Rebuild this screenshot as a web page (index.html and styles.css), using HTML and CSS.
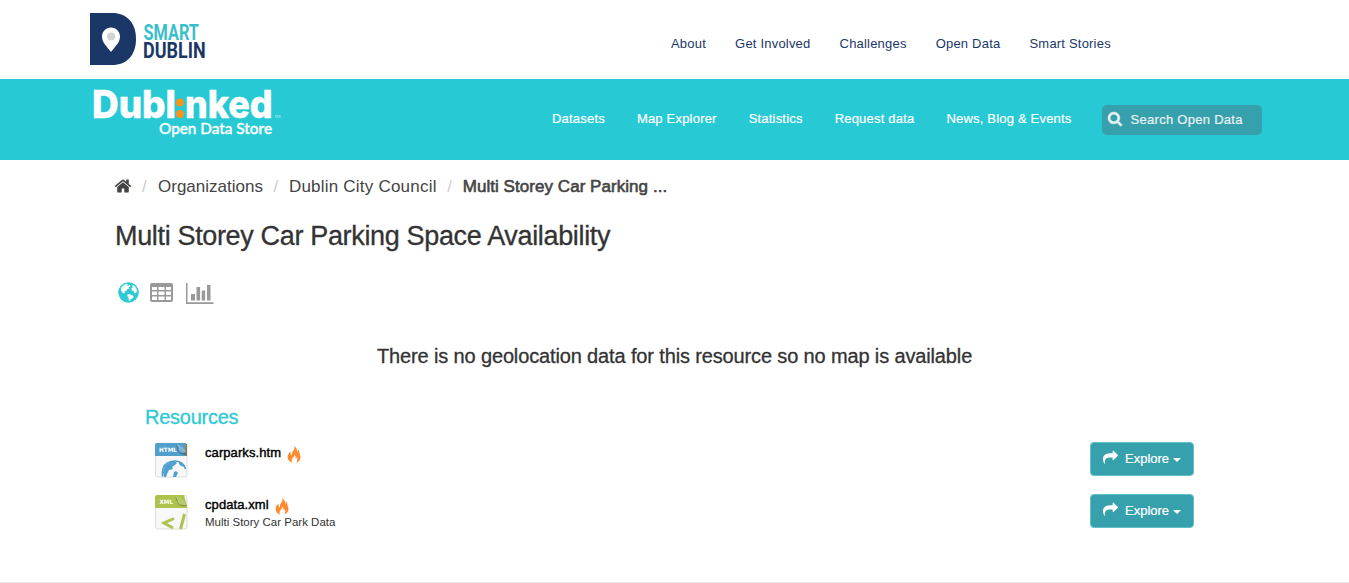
FILE: index.html
```html
<!DOCTYPE html>
<html lang="en">
<head>
<meta charset="utf-8">
<title>Multi Storey Car Parking Space Availability</title>
<link rel="stylesheet" href="styles.css">
</head>
<body>
<svg width="0" height="0" class="defs">
  <symbol id="flame" viewBox="0 0 14 17"><path fill="#ff8a2b" d="M7 0c1.300 2.500-.3 4-1.300 5.600C4.800 7 5 8.600 4.700 9.800 3.700 9 3.500 7.500 3.700 5.800 1.300 7.500.1 9.700.7 12c.6 2.400 2.300 4 4.300 4.600-.9-2-.2-3.800 1-5 .9-.9 1.300-2 1-3.200 1.600 1.300 1.900 2.900 1.500 4.400.8-.4 1.300-1.100 1.300-2 1 2.200.6 4.300-.7 6 2.600-.8 4.500-3 4.400-5.900-.1-2.900-2-4-1.200-7.300-1.400.8-2 2.200-1.800 3.900C10.400 5 10.200 2 7 0z"/></symbol>
  <symbol id="share" viewBox="0 0 1792 1792"><path fill="#fff" d="M1792 640q0 26-19 45l-512 512q-19 19-45 19t-45-19-19-45v-256h-224q-98 0-175.500 6t-154 21.500-133 42.500-105.500 69.500-80 101-48.500 138.500-17.500 181q0 55 5 123 0 6 2.500 23.500t2.500 26.500q0 15-8.500 25t-23.500 10q-16 0-28-17-7-9-13-22t-13.500-30-10.500-24q-127-285-127-451 0-199 53-333 162-403 875-403h224v-256q0-26 19-45t45-19 45 19l512 512q19 19 19 45z"/></symbol>
</svg>
<header class="top">
  <svg class="smart-logo" width="118" height="54" viewBox="0 0 118 54">
    <path fill="#1b3768" d="M0 1h22C37 1 46 11 46 27S37 53 22 53H0z"/>
    <path fill="#fff" d="M21 15.500c-5 0-9 4-9 9C12 31 17.500 35 21 40c3.500-5 9-9 9-15.500 0-5-4-9-9-9z"/>
    <circle cx="21" cy="24.500" r="4" fill="#d1d3d4"/>
    <text class="lt smart" transform="translate(53.500 28) scale(.72 1)" textLength="77" lengthAdjust="spacingAndGlyphs">SMART</text>
    <text class="lt dublin" transform="translate(53 46) scale(.72 1)" textLength="87" lengthAdjust="spacingAndGlyphs">DUBLIN</text>
  </svg>
  <nav class="nav-top"><a>About</a><a>Get Involved</a><a>Challenges</a><a>Open Data</a><a>Smart Stories</a></nav>
</header>
<div class="band">
  <svg class="store-logo" width="192" height="52" viewBox="0 0 192 52">
    <text class="brand" x="0" y="31" textLength="84" lengthAdjust="spacingAndGlyphs">Dubl</text>
    <text class="brand" x="93" y="31" textLength="87.500" lengthAdjust="spacingAndGlyphs">nked</text>
    <circle cx="88" cy="15.500" r="4" fill="#f7941e"/><circle cx="88" cy="27" r="4" fill="#f7941e"/>
    <text class="tm" x="182.500" y="31">TM</text>
    <text class="store" x="67" y="46.500" textLength="113" lengthAdjust="spacingAndGlyphs">Open Data Store</text>
  </svg>
  <nav class="nav-main"><a>Datasets</a><a>Map Explorer</a><a>Statistics</a><a>Request data</a><a>News, Blog &amp; Events</a></nav>
  <div class="search">
    <svg width="15" height="15" viewBox="0 0 1792 1792"><path fill="#e9f1f2" stroke="#e9f1f2" stroke-width="70" d="M1152 832q0-185-131.500-316.500t-316.500-131.500-316.500 131.500-131.500 316.500 131.500 316.500 316.500 131.500 316.500-131.500 131.500-316.500zm512 832q0 52-38 90t-90 38q-54 0-90-38l-343-342q-179 124-399 124-143 0-273.500-55.500t-225-150-150-225-55.500-273.500 55.500-273.500 150-225 225-150 273.500-55.500 273.500 55.500 225 150 150 225 55.500 273.500q0 220-124 399l343 343q37 37 37 90z"/></svg>
    <span>Search Open Data</span>
  </div>
</div>
<main>
  <div class="crumbs">
    <svg class="home" width="18" height="18" viewBox="0 0 1792 1792"><path fill="#444" d="M1472 992v480q0 26-19 45t-45 19h-384v-384h-256v384h-384q-26 0-45-19t-19-45v-480q0-1 .5-3t.5-3l575-474 575 474q1 2 1 6zm223-69l-62 74q-8 9-21 11h-3q-13 0-21-7l-692-577-692 577q-12 8-24 7-13-2-21-11l-62-74q-8-10-7-23.500t11-21.500l719-599q32-26 76-26t76 26l244 204v-195q0-14 9-23t23-9h192q14 0 23 9t9 23v408l219 182q10 8 11 21.500t-7 23.500z"/></svg>
    <i>/</i><a>Organizations</a><i>/</i><a class="council">Dublin City Council</a><i>/</i><a class="current">Multi Storey Car Parking ...</a>
  </div>
  <h1>Multi Storey Car Parking Space Availability</h1>
  <div class="views">
    <svg class="globe" width="21" height="21" viewBox="0 0 21 21"><circle cx="10.500" cy="10.500" r="10.300" fill="#2fcbd4"/><path fill="#fff" d="M3.300 5.500 6 2.700l3-.9.800.7-1 1 1.500.2 1.500-1 .5 1.200-1.500 1.300.5 1.200-2 .8-1.300 1.800-1.800.7.800 1.300-1.400.2-1.600-1-1.200-2.200zM9.500 12.500l2.200-.5 2 1.200 2 .8-1 2.300-2 1-.8 1.800-1-.4-.3-3-1.300-1.500zM14 3.800l1.800-.6 2.200 2.500 1 3-1 2.300-1.600.2-.7-2.200-1.900-.5-.6-2 1.500-.7z"/></svg>
    <svg class="table" width="23" height="19" viewBox="0 0 23 19"><rect width="23" height="19" rx="2" fill="#999"/><path fill="#fff" d="M2 4h5v3H2zm6.500 0h6v3h-6zM16 4h5v3h-5zM2 8.500h5v3.500H2zm6.500 0h6V12h-6zm7.500 0h5V12h-5zM2 13.500h5V17H2zm6.500 0h6V17h-6zm7.500 0h5V17h-5z"/></svg>
    <svg class="chart" width="28" height="21" viewBox="0 0 28 21"><path fill="#999" d="M0 0h1.500v19.200H27.500V21H0zM5 11h4v6.500H5zm5.500-7h3.600v13.500h-3.600zm5.200 3.500h3.500v10h-3.500zM21 2h3.500v15.500H21z"/></svg>
  </div>
  <p class="notice">There is no geolocation data for this resource so no map is available</p>
  <section class="resources">
    <h2>Resources</h2>
    <div class="row">
      <svg class="file" width="33" height="35" viewBox="0 0 33 35">
        <rect x=".5" y=".5" width="31.500" height="33.500" rx="2" fill="#f8f8f8" stroke="#ddd"/>
        <path fill="#519fcc" d="M2 0h29v13H0V2q0-2 2-2z"/><path fill="#a7752d" d="M30.500 1H32v12h-1.500z"/>
        <path fill="#3f779a" d="M21 1l10 8v3q-5 0-8-3z"/><path fill="#80b3d0" d="M21 1q8 2 10 8-5 2-7-1 0-4-3-7z"/>
        <text class="ext" x="4" y="9.300" textLength="18" lengthAdjust="spacingAndGlyphs">HTML</text>
        <path fill="none" stroke="#519fcc" stroke-width="1.600" d="M7.500 33.500q-1-10 5-13.500 8-4 14 0 3 2 4 6"/>
        <path fill="#519fcc" d="M14 20l5-2 3 2-2 2-3 2 1 2-4 1-2 4-1 3h-2l-1-5 2-6zM24 19l3 2 2 3-3-1-2-2zM19 29l2-1 2 2-2 4h-3z"/>
      </svg>
      <div class="info"><div class="name"><span>carparks.htm</span><svg width="14" height="17"><use href="#flame"/></svg></div></div>
      <div class="button"><svg width="15" height="15"><use href="#share"/></svg><span>Explore</span><b></b></div>
    </div>
    <div class="row">
      <svg class="file" width="33" height="35" viewBox="0 0 33 35">
        <rect x=".5" y=".5" width="31.500" height="33.500" rx="2" fill="#f8f8f8" stroke="#ddd"/>
        <path fill="#adc34e" d="M2 0h27l3 11v2H0V2q0-2 2-2z"/>
        <path fill="#7b8d33" d="M20 1l12 10q-6 1-9-2z"/><path fill="#b9ca72" d="M20 1q8 2 12 9-6 1-9-2 0-4-3-7z"/>
        <text class="ext" x="4.500" y="9" textLength="13.500" lengthAdjust="spacingAndGlyphs">XML</text>
        <path fill="none" stroke="#adc34e" stroke-width="3" d="M19 23.500l-10 4.500 9 5M29.500 19l-4 15"/>
      </svg>
      <div class="info"><div class="name"><span>cpdata.xml</span><svg width="14" height="17"><use href="#flame"/></svg></div><div class="desc">Multi Story Car Park Data</div></div>
      <div class="button"><svg width="15" height="15"><use href="#share"/></svg><span>Explore</span><b></b></div>
    </div>
  </section>
</main>
</body>
</html>
```
FILE: styles.css
```css
* { box-sizing: border-box; }
body { margin: 0; height: 583px; overflow: hidden; background: #fff; color: #333; font: 13px "Liberation Sans", Arial, sans-serif; display: flex; flex-direction: column; }
svg { display: block; flex: none; overflow: visible; }
.defs { display: none; }
.top { height: 79px; flex: none; display: flex; padding: 12px 0 0 90px; }
.lt { font: bold 22px Roboto, sans-serif; }
.smart { fill: #39bfc9; }
.dublin { fill: #1b3768; }
.nav-top, .nav-main { display: flex; letter-spacing: .2px; line-height: 16px; white-space: nowrap; }
.nav-top { gap: 29.100px; margin: 24px 0 0 463px; color: #1b3768; }
.band { height: 81px; flex: none; display: flex; background: #27cad4; padding: 8px 0 0 92px; }
.brand { font: 800 38px Inter, sans-serif; fill: #fff; stroke: #fff; stroke-width: .5px; }
.tm { font: 4px Lato, sans-serif; fill: #d6f4f6; }
.store { font: 500 15px Lato, sans-serif; fill: #fff; stroke: #fff; stroke-width: .35px; }
.nav-main { gap: 32px; margin: 24px 0 0 268px; color: #fff; -webkit-text-stroke: .2px #fff; }
.search { width: 160px; height: 30px; margin: 18px 0 0 30px; background: #36a1ac; border-radius: 5px; display: flex; padding: 6px 0 0 6px; gap: 8px; color: #e9f1f2; letter-spacing: .28px; line-height: 17px; -webkit-text-stroke: .2px #e9f1f2; }
main { flex: 1; border-bottom: 1px solid #e8e8e8; padding: 16px 0 0 115px; }
.crumbs { display: flex; height: 22px; line-height: 22px; font-size: 17px; letter-spacing: 0; color: #444; white-space: nowrap; }
.crumbs i { font-style: normal; color: #ccc; width: 5px; margin: 0 10.500px; }
.crumbs i:first-of-type { margin: 0 11px; }
.home { margin: 1px -1px 0 -1px; }
.council { letter-spacing: .22px; }
.current { letter-spacing: .05px; -webkit-text-stroke: .6px #444; }
h1 { font-size: 27px; font-weight: 400; line-height: 32px; letter-spacing: -.34px; margin: 22px 0 0; -webkit-text-stroke: .3px #333; }
.views { display: flex; height: 22px; margin: 30px 0 0 3px; }
.table { margin: 1px 0 0 11px; }
.chart { margin: 1px 0 0 13px; }
.notice { margin: 40px 0 0 262px; font-size: 20px; line-height: 24px; letter-spacing: -.14px; -webkit-text-stroke: .3px #333; }
.resources { padding-left: 30px; }
h2 { color: #2fc9d3; font-size: 20px; font-weight: 400; line-height: 24px; letter-spacing: -.26px; margin: 37px 0 13px; -webkit-text-stroke: .3px #2fc9d3; }
.row { display: flex; height: 52px; padding-left: 10px; }
.file { margin-top: 1px; }
.ext { font: bold 6px "DejaVu Sans", sans-serif; fill: #fff; }
.info { width: 885px; margin-left: 17px; }
.name { display: flex; gap: 6px; color: #000; line-height: 16px; padding-top: 3px; letter-spacing: .08px; -webkit-text-stroke: .4px #000; }
.name svg { margin-top: 1px; }
.desc { font-size: 11.500px; line-height: 14px; color: #333; }
.button { width: 104px; height: 34px; background: #36a1ac; border: 1px solid #5fc0c8; border-radius: 4px; color: #fff; display: flex; padding: 7px 0 0 12px; line-height: 18px; }
.button span { margin-left: 7px; -webkit-text-stroke: .2px #fff; }
.button b { border: 4px solid transparent; border-top-color: #fff; border-bottom: 0; height: 0; margin: 8px 0 0 4px; }
```
